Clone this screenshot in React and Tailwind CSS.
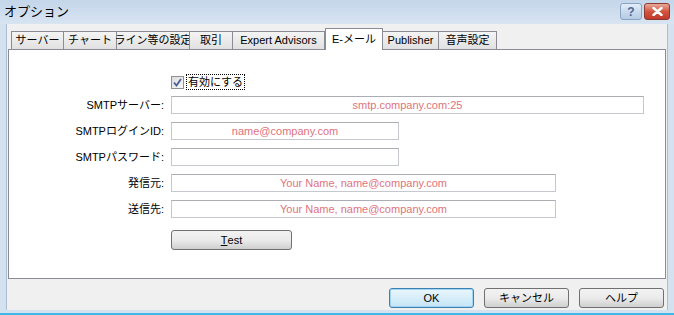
import React from 'react';

const font = { fontFamily: '"Liberation Sans", "Noto Sans CJK JP", sans-serif' };

const tabs = [
    { label: 'サーバー', w: 'w-[53px]' },
    { label: 'チャート', w: 'w-[54px]' },
    { label: 'ライン等の設定', w: 'w-[74px]' },
    { label: '取引', w: 'w-[44px]' },
    { label: 'Expert Advisors', w: 'w-[93px]' },
    { label: 'E-メール', w: 'w-[58px]', active: true },
    { label: 'Publisher', w: 'w-[57px]' },
    { label: '音声設定', w: 'w-[59px]' },
];

function Field({ label, width, value }) {
    return (
        <div className="flex items-center h-[26px]">
            <div className="w-[155px] text-right text-[11px] text-black whitespace-nowrap">{label}</div>
            <div className={`ml-[7px] ${width} h-[18px] border border-[#c5c8ce] border-t-[#abadb3] bg-white flex items-center justify-center text-[11px] text-[#e0737d] whitespace-nowrap`}>
                {value}
            </div>
        </div>
    );
}

function DlgButton({ children, focused }) {
    return (
        <div
            className={`w-[85px] h-[20px] rounded-[3px] flex items-center justify-center text-[11px] text-black border ${
                focused
                    ? 'border-[#3c7fb1] bg-gradient-to-b from-[#eaf6fd] to-[#c4e5f6] shadow-[inset_0_0_0_1px_#9fd5f2]'
                    : 'border-[#707070] bg-gradient-to-b from-[#f2f2f2] via-[#ebebeb] to-[#cfcfcf]'
            }`}
        >
            {children}
        </div>
    );
}

export default function App() {
    return (
        <div className="w-[674px] h-[315px] overflow-hidden flex flex-col bg-[#d4e1ef]" style={font}>
            {/* title bar */}
            <div className="h-[24px] flex items-center justify-between pl-[4px] pr-[4px] bg-gradient-to-b from-[#c4d6ea] to-[#d8e4f2]">
                <span className="text-[13px] text-black">オプション</span>
                <div className="flex items-start gap-[2px] self-start pt-[3px]">
                    <div className="w-[22px] h-[17px] rounded-[3px] border border-[#8aa3c2] bg-gradient-to-b from-[#e4eef9] via-[#c9daee] to-[#b6cbe4] flex items-center justify-center text-[12px] font-bold text-[#4d6b93]">
                        ?
                    </div>
                    <div className="w-[26px] h-[17px] rounded-[3px] border border-[#8d3a30] bg-gradient-to-b from-[#e9a99c] via-[#d2553f] to-[#c0392b] flex items-center justify-center">
                        <svg width="11" height="9" viewBox="0 0 11 9">
                            <path d="M1.5 1 L9.5 8 M9.5 1 L1.5 8" stroke="#ffffff" strokeWidth="2.4" strokeLinecap="round" />
                        </svg>
                    </div>
                </div>
            </div>

            {/* client area */}
            <div className="flex-1 mx-[6px] mb-[3px] border-l border-r border-[#aebed2] bg-[#f0f0f0] flex flex-col pl-[1px] pr-[1px]">
                {/* tabs */}
                <div className="flex items-end h-[25px] pl-[3px]">
                    {tabs.map(t =>
                        t.active ? (
                            <div
                                key={t.label}
                                className={`${t.w} h-[22px] -mb-px relative z-10 border border-b-0 border-[#898c95] bg-white flex items-center justify-center text-[11px] text-black whitespace-nowrap`}
                            >
                                {t.label}
                            </div>
                        ) : (
                            <div
                                key={t.label}
                                className={`${t.w} h-[18px] border border-b-0 border-[#898c95] -ml-px first:ml-0 bg-gradient-to-b from-[#f4f4f4] to-[#e1e1e1] flex items-center justify-center text-[11px] text-black whitespace-nowrap`}
                            >
                                {t.label}
                            </div>
                        )
                    )}
                </div>

                {/* panel */}
                <div className="h-[230px] border border-[#898c95] bg-white flex flex-col">
                    <div className="flex items-center h-[16px] mt-[24px] pl-[162px]">
                        <div className="w-[13px] h-[13px] border border-[#8e8f8f] bg-gradient-to-br from-[#dcdcdc] to-[#f8f8f8] flex items-center justify-center">
                            <svg width="9" height="9" viewBox="0 0 9 9">
                                <path d="M1 4.5 L3.5 7.5 L8 1" stroke="#4a5f97" strokeWidth="1.8" fill="none" />
                            </svg>
                        </div>
                        <span className="ml-[2px] px-[1px] border border-dotted border-black text-[11px] leading-[14px] text-black">有効にする</span>
                    </div>
                    <div className="flex flex-col mt-[2px]">
                        <Field label="SMTPサーバー:" width="w-[473px]" value="smtp.company.com:25" />
                        <Field label="SMTPログインID:" width="w-[228px]" value="name@company.com" />
                        <Field label="SMTPパスワード:" width="w-[228px]" value="" />
                        <Field label="発信元:" width="w-[385px]" value="Your Name, name@company.com" />
                        <Field label="送信先:" width="w-[385px]" value="Your Name, name@company.com" />
                    </div>
                    <div className="pl-[162px] mt-[8px]">
                        <div className="w-[121px] h-[20px] rounded-[3px] border border-[#707070] bg-gradient-to-b from-[#f2f2f2] via-[#ebebeb] to-[#cfcfcf] flex items-center justify-center text-[11px] text-black">
                            <span className="underline">T</span>est
                        </div>
                    </div>
                </div>

                {/* dialog buttons */}
                <div className="flex justify-end gap-[10px] pr-[2px] mt-[9px]">
                    <DlgButton focused>OK</DlgButton>
                    <DlgButton>キャンセル</DlgButton>
                    <DlgButton>ヘルプ</DlgButton>
                </div>
            </div>
            <div className="h-[2px] bg-[#3fb6e6]" />
        </div>
    );
}
